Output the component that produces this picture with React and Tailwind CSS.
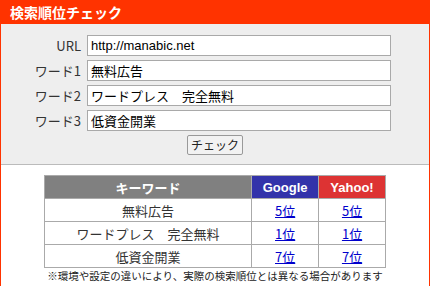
import React from 'react';

const fields = [
  { label: 'URL', value: 'http://manabic.net' },
  { label: 'ワード1', value: '無料広告' },
  { label: 'ワード2', value: 'ワードプレス　完全無料' },
  { label: 'ワード3', value: '低資金開業' },
];

const results = [
  { keyword: '無料広告', google: '5位', yahoo: '5位' },
  { keyword: 'ワードプレス　完全無料', google: '1位', yahoo: '1位' },
  { keyword: '低資金開業', google: '7位', yahoo: '7位' },
];

const App = () => {
  return (
    <div className="w-[430px] h-[286px] bg-white font-['Noto_Sans_CJK_JP',sans-serif] text-[#222]">
      <div className="h-[24px] bg-[#ff3300] pl-[10px] flex items-center text-white font-bold text-[14px] leading-none">
        検索順位チェック
      </div>
      <div className="h-[262px] border-x border-[#ff3300] flex flex-col">
        <div className="bg-[#eeeeee] border-b border-[#bbbbbb] pt-[11px] pb-[9px] flex flex-col">
          {fields.map((f) => (
            <div key={f.label} className="flex items-center mb-[4px]">
              <label className="w-[86px] pr-[6px] text-right text-[13px] leading-none text-[#333]">{f.label}</label>
              <input
                type="text"
                defaultValue={f.value}
                className="w-[304px] h-[21px] bg-white border border-[#a9a9a9] px-[3px] text-[13px] leading-none text-black font-['Liberation_Sans','Noto_Sans_CJK_JP',sans-serif] outline-none"
              />
            </div>
          ))}
          <div className="flex justify-center">
            <button className="w-[56px] h-[20px] bg-[#f2f2f2] border border-[#999] rounded-[2px] text-[12px] leading-none text-[#222]">
              チェック
            </button>
          </div>
        </div>
        <div className="pt-[10px] flex flex-col items-center">
          <table className="w-[342px] border-collapse text-[13px] leading-none text-[#333]">
            <thead>
              <tr className="h-[23px]">
                <th className="w-[208px] bg-[#808080] border border-[#aaaaaa] text-white font-bold">キーワード</th>
                <th className="w-[67px] bg-[#3333aa] border border-[#aaaaaa] text-white font-bold font-['Liberation_Sans',sans-serif]">Google</th>
                <th className="w-[67px] bg-[#dd3333] border border-[#aaaaaa] text-white font-bold font-['Liberation_Sans',sans-serif]">Yahoo!</th>
              </tr>
            </thead>
            <tbody>
              {results.map((r) => (
                <tr key={r.keyword} className="h-[23px]">
                  <td className="border border-[#aaaaaa] text-center">{r.keyword}</td>
                  <td className="border border-[#aaaaaa] text-center">
                    <a href="#" className="text-[#0000cc] underline">{r.google}</a>
                  </td>
                  <td className="border border-[#aaaaaa] text-center">
                    <a href="#" className="text-[#0000cc] underline">{r.yahoo}</a>
                  </td>
                </tr>
              ))}
            </tbody>
          </table>
          <p className="mt-[3px] text-[10.5px] leading-none text-[#222]">
            ※環境や設定の違いにより、実際の検索順位とは異なる場合があります
          </p>
        </div>
      </div>
    </div>
  );
};

export default App;
